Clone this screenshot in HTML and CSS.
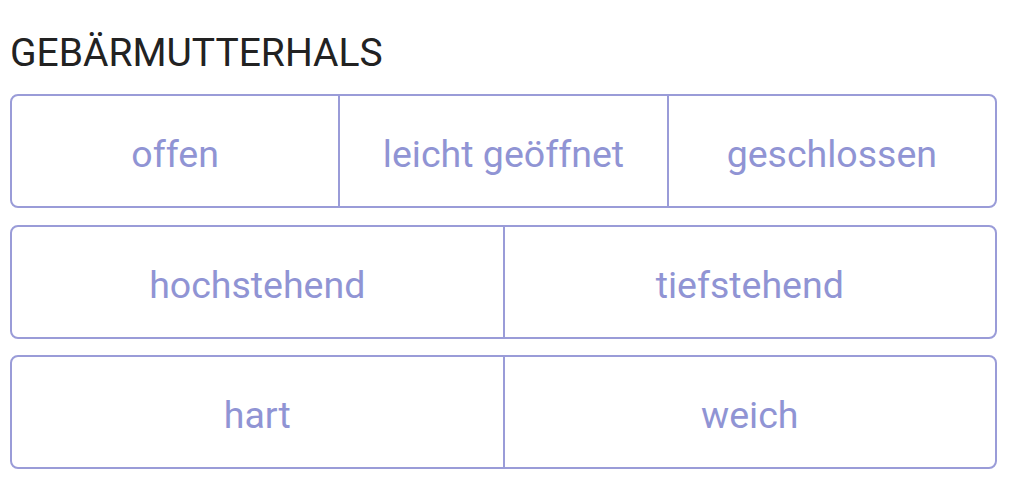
FILE: index.html
```html
<!DOCTYPE html>
<html>
<head>
<meta charset="utf-8">
<link rel="stylesheet" href="styles.css">
</head>
<body>
<div class="page">
  <h1 class="title">GEBÄRMUTTERHALS</h1>
  <div class="rows">
    <div class="group">
      <div class="opt">offen</div>
      <div class="opt">leicht geöffnet</div>
      <div class="opt">geschlossen</div>
    </div>
    <div class="group">
      <div class="opt">hochstehend</div>
      <div class="opt">tiefstehend</div>
    </div>
    <div class="group">
      <div class="opt">hart</div>
      <div class="opt">weich</div>
    </div>
  </div>
</div>
</body>
</html>
```

FILE: styles.css
```css
html, body {
  margin: 0;
  padding: 0;
  background: #ffffff;
}
.page {
  padding: 31px 27px 0 10px;
  font-family: Roboto, "Noto Sans", sans-serif;
}
.title {
  margin: 0 0 19px 0;
  font-size: 39px;
  line-height: 44px;
  font-weight: 400;
  color: #222222;
}
.rows {
  display: flex;
  flex-direction: column;
  gap: 16.5px;
}
.group {
  display: flex;
  height: 114px;
  box-sizing: border-box;
  border: 2px solid #9a9cd8;
  border-radius: 8px;
}
.opt {
  flex: 1 1 0;
  display: flex;
  align-items: center;
  justify-content: center;
  font-size: 37.5px;
  color: #9094d4;
  padding-top: 6px;
  box-sizing: border-box;
}
.opt + .opt {
  border-left: 2px solid #9a9cd8;
}
```
